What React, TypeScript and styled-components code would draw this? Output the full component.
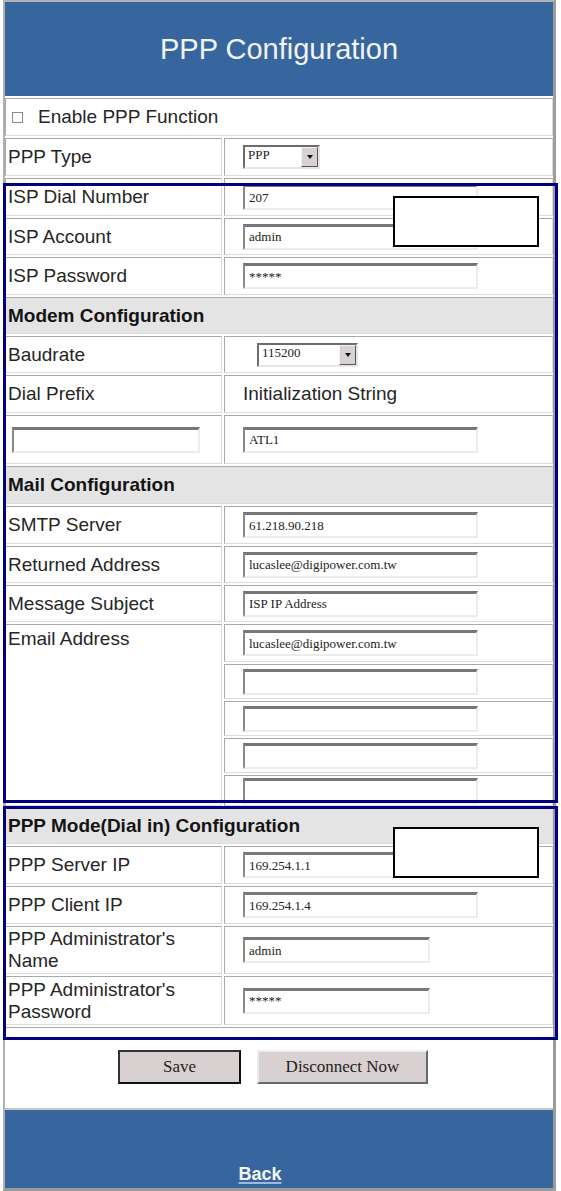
import React from "react";
import styled, { createGlobalStyle } from "styled-components";

const GlobalStyle = createGlobalStyle`
  html, body {
    margin: 0;
    padding: 0;
    background: #fff;
  }
  body {
    font-family: "Liberation Sans", Arial, sans-serif;
    color: #262626;
  }
`;

const Page = styled.div`
  position: relative;
  width: 561px;
  height: 1191px;
  overflow: hidden;
`;

const Frame = styled.div`
  box-sizing: border-box;
  width: 553px;
  margin-left: 3px;
  border-top: 2px solid #b4b4b4;
  border-left: 2px solid #b0b0b0;
  border-right: 3px solid #9c9c9c;
  border-bottom: 3px solid #9c9c9c;
  background: #fff;
`;

const Banner = styled.div<{ $h: number; $bottom?: boolean }>`
  box-sizing: border-box;
  height: ${(p) => p.$h}px;
  background: #37669e;
  display: flex;
  justify-content: center;
  align-items: ${(p) => (p.$bottom ? "flex-end" : "center")};
  ${(p) => (p.$bottom ? "border-top: 2px solid #c6c6c6; padding: 0 38px 3px 0;" : "")}
`;

const Title = styled.h1`
  margin: 0;
  font-size: 29px;
  font-weight: normal;
  color: #f3f3f3;
`;

const BackLink = styled.a`
  font-size: 18px;
  font-weight: bold;
  color: #f6f6f6;
  text-decoration: underline;
  text-decoration-color: #9fb8dc;
  text-decoration-thickness: 2px;
  text-underline-offset: 2px;
`;

const Table = styled.div`
  display: grid;
  grid-template-columns: 217px 1fr;
  grid-template-rows:
    38px 38px 38px 37px 38px 37px 37px 38px 49px 38px 38px 37px
    37px 38px 35px 35px 35px 31px 36px 38px 38px 48px 49px;
  gap: 2px;
  padding-top: 2px;
`;

const Cell = styled.div<{
  $full?: boolean;
  $rows?: number;
  $pad?: number;
  $top?: boolean;
  $head?: boolean;
}>`
  box-sizing: border-box;
  grid-column: ${(p) => (p.$full ? "1 / -1" : "auto")};
  grid-row: ${(p) => (p.$rows ? `span ${p.$rows}` : "auto")};
  display: flex;
  align-items: ${(p) => (p.$top ? "flex-start" : "center")};
  padding: ${(p) => (p.$top ? "3px" : "0")} 0 0 ${(p) => p.$pad ?? 2}px;
  border: 1px solid;
  border-color: #a9a9a9 #dcdcdc #dcdcdc #a9a9a9;
  background: ${(p) => (p.$head ? "#e4e4e4" : "#fff")};
  font-size: 19px;
  font-weight: ${(p) => (p.$head ? "bold" : "normal")};
  color: ${(p) => (p.$head ? "#141414" : "#262626")};
  line-height: 22px;
  overflow: hidden;
  white-space: nowrap;
`;

const Check = styled.span`
  box-sizing: border-box;
  width: 11px;
  height: 11px;
  margin-right: 15px;
  border: 1px solid #8a8a8a;
  background: #fff;
`;

const TextBox = styled.input<{ $w: number }>`
  box-sizing: border-box;
  width: ${(p) => p.$w}px;
  height: 26px;
  margin: 0;
  padding: 0 4px;
  border-style: solid;
  border-width: 3px 2px 2px 2px;
  border-color: #777 #ececec #ececec #8a8a8a;
  background: #fff;
  font-family: "Liberation Serif", "Times New Roman", serif;
  font-size: 13px;
  color: #222;
  outline: none;
`;

const SelectBox = styled.div<{ $w: number }>`
  box-sizing: border-box;
  width: ${(p) => p.$w}px;
  height: 24px;
  display: flex;
  align-items: stretch;
  border: 2px solid;
  border-color: #6c6c6c #e6e6e6 #e6e6e6 #6c6c6c;
  background: #fff;
  font-family: "Liberation Serif", "Times New Roman", serif;
  font-size: 13px;
  color: #222;
`;

const SelectValue = styled.span`
  flex: 1;
  padding: 0 3px;
  line-height: 16px;
`;

const SelectArrow = styled.span`
  box-sizing: border-box;
  width: 17px;
  display: flex;
  align-items: center;
  justify-content: center;
  background: #d8d2d2;
  border: 1px solid;
  border-color: #f4f4f4 #555 #555 #f4f4f4;

  &::after {
    content: "";
    border-left: 3.5px solid transparent;
    border-right: 3.5px solid transparent;
    border-top: 4px solid #111;
  }
`;

const ButtonBar = styled.div`
  box-sizing: border-box;
  height: 81px;
  margin-top: 2px;
  border-top: 1px solid #a9a9a9;
  display: flex;
  justify-content: center;
  gap: 16px;
  padding: 22px 12px 0 0;
`;

const Button = styled.button<{ $w: number; $primary?: boolean }>`
  box-sizing: border-box;
  width: ${(p) => p.$w}px;
  height: 34px;
  padding: 0;
  background: #d9d1d1;
  border: 2px solid;
  border-color: ${(p) => (p.$primary ? "#333 #111 #111 #333" : "#ededed #6a6a6a #6a6a6a #ededed")};
  font-family: "Liberation Serif", "Times New Roman", serif;
  font-size: 17px;
  color: #222;
`;

const Annotation = styled.div<{ $top: number; $h: number }>`
  position: absolute;
  left: 3px;
  top: ${(p) => p.$top}px;
  width: 555px;
  height: ${(p) => p.$h}px;
  box-sizing: border-box;
  border: 3px solid #000080;
  pointer-events: none;
`;

const Mask = styled.div<{ $top: number }>`
  position: absolute;
  left: 393px;
  top: ${(p) => p.$top}px;
  width: 146px;
  height: 51px;
  box-sizing: border-box;
  border: 2px solid #000;
  background: #fff;
`;

type Field = { label: string; value: string; w?: number; two?: boolean };

const ispFields: Field[] = [
  { label: "ISP Dial Number", value: "207" },
  { label: "ISP Account", value: "admin" },
  { label: "ISP Password", value: "*****" },
];

const mailFields: Field[] = [
  { label: "SMTP Server", value: "61.218.90.218" },
  { label: "Returned Address", value: "lucaslee@digipower.com.tw" },
  { label: "Message Subject", value: "ISP IP Address" },
];

const dialInFields: Field[] = [
  { label: "PPP Server IP", value: "169.254.1.1" },
  { label: "PPP Client IP", value: "169.254.1.4" },
  { label: "PPP Administrator's\nName", value: "admin", w: 187 },
  { label: "PPP Administrator's\nPassword", value: "*****", w: 187 },
];

const FieldRow = ({ label, value, w = 235 }: Field) => (
  <>
    <Cell style={{ whiteSpace: "pre" }}>{label}</Cell>
    <Cell $pad={18}>
      <TextBox $w={w} defaultValue={value} readOnly />
    </Cell>
  </>
);

export default function App() {
  return (
    <Page>
      <GlobalStyle />
      <Frame>
        <Banner $h={94}>
          <Title>PPP Configuration</Title>
        </Banner>

        <Table>
          <Cell $full $pad={6}>
            <Check />
            Enable PPP Function
          </Cell>
          <Cell>PPP Type</Cell>
          <Cell $pad={18}>
            <SelectBox $w={77}>
              <SelectValue>PPP</SelectValue>
              <SelectArrow />
            </SelectBox>
          </Cell>
          {ispFields.map((f) => (
            <FieldRow key={f.label} {...f} />
          ))}

          <Cell $full $head>
            Modem Configuration
          </Cell>
          <Cell>Baudrate</Cell>
          <Cell $pad={32}>
            <SelectBox $w={101}>
              <SelectValue>115200</SelectValue>
              <SelectArrow />
            </SelectBox>
          </Cell>
          <Cell>Dial Prefix</Cell>
          <Cell $pad={18}>Initialization String</Cell>
          <Cell $pad={6}>
            <TextBox $w={188} defaultValue="" readOnly />
          </Cell>
          <Cell $pad={18}>
            <TextBox $w={235} defaultValue="ATL1" readOnly />
          </Cell>

          <Cell $full $head>
            Mail Configuration
          </Cell>
          {mailFields.map((f) => (
            <FieldRow key={f.label} {...f} />
          ))}
          <Cell $rows={5} $top>
            Email Address
          </Cell>
          {["lucaslee@digipower.com.tw", "", "", "", ""].map((v, i) => (
            <Cell key={i} $pad={18}>
              <TextBox $w={235} defaultValue={v} readOnly />
            </Cell>
          ))}

          <Cell $full $head>
            PPP Mode(Dial in) Configuration
          </Cell>
          {dialInFields.map((f) => (
            <FieldRow key={f.label} {...f} />
          ))}
        </Table>

        <ButtonBar>
          <Button $w={123} $primary>
            Save
          </Button>
          <Button $w={171}>Disconnect Now</Button>
        </ButtonBar>

        <Banner $h={80} $bottom>
          <BackLink href="#">Back</BackLink>
        </Banner>
      </Frame>

      <Annotation $top={183} $h={620} />
      <Annotation $top={806} $h={234} />
      <Mask $top={196} />
      <Mask $top={827} />
    </Page>
  );
}
